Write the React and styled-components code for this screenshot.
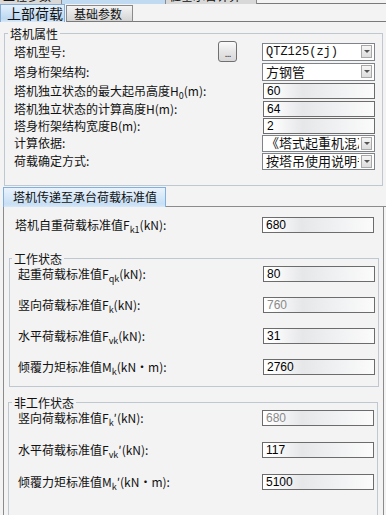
import React from 'react';
import styled, { createGlobalStyle } from 'styled-components';

const GlobalStyle = createGlobalStyle`
  body {
    margin: 0;
    background: #f3f3f3;
  }
`;

const Page = styled.div`
  width: 386px;
  height: 515px;
  overflow: hidden;
  background: #f3f3f3;
  font-family: "Noto Sans CJK SC", sans-serif;
  font-size: 12px;
  color: #111;
  display: flex;
  flex-direction: column;
`;

const TopStrip = styled.div`
  display: flex;
  height: 5px;
`;

const StubTab = styled.div`
  width: ${p => p.$w}px;
  height: 4px;
  overflow: hidden;
  background: ${p => (p.$active ? '#c0daf2' : '#d8d8d8')};
  border-right: 1px solid #8a8a8a;
  font-size: 12px;
  line-height: 12px;
  white-space: nowrap;
`;

const StubText = styled.div`
  margin-top: -10px;
  padding-left: 3px;
`;

const StripLine = styled.div`
  flex: 1;
  border-bottom: 1px solid #7a7a7a;
`;

const TabRow = styled.div`
  display: flex;
  align-items: flex-end;
  height: 18px;
`;

const Tab = styled.div`
  box-sizing: border-box;
  height: ${p => (p.$active ? 18 : 17)}px;
  width: ${p => (p.$active ? 65 : 67)}px;
  margin-left: ${p => (p.$active ? 0 : 1)}px;
  padding-left: ${p => (p.$active ? 6 : 7)}px;
  font-size: ${p => (p.$active ? 14 : 12)}px;
  line-height: ${p => (p.$active ? 17 : 15)}px;
  white-space: nowrap;
  background: ${p =>
    p.$active
      ? 'linear-gradient(#e4f0fb, #bcd8f1 80%, #d9e9f7)'
      : 'linear-gradient(#f4f4f4, #d4d4d4)'};
  border: 1px solid ${p => (p.$active ? '#86acd3' : '#8a8a8a')};
  border-bottom: ${p => (p.$active ? 'none' : '1px solid #7a7a7a')};
`;

const TabFill = styled.div`
  flex: 1;
  height: 100%;
  border-bottom: 1px solid #7a7a7a;
`;

const Group = styled.fieldset`
  margin: ${p => p.$m};
  padding: ${p => p.$pt || 0}px ${p => p.$pr}px ${p => p.$pb}px ${p => p.$pl}px;
  border: 1px solid #bfc8d0;
  min-width: 0;
  display: flex;
  flex-direction: column;
  gap: ${p => p.$gap || 0}px;
`;

const Legend = styled.legend`
  margin-left: ${p => p.$ml}px;
  padding: 0 2px;
  font-size: 12px;
  line-height: 13px;
  height: 13px;
`;

const Row = styled.div`
  display: flex;
  align-items: center;
  height: ${p => p.$h}px;
  padding-left: ${p => p.$pl || 0}px;
  padding-right: ${p => p.$pr || 0}px;
`;

const Label = styled.div`
  flex: 1;
  white-space: nowrap;
  line-height: 14px;
`;

const Sub = styled.sub`
  font-size: 9px;
  line-height: 0;
  vertical-align: -3px;
`;

const DotsButton = styled.div`
  box-sizing: border-box;
  width: 19px;
  height: 21px;
  margin-right: 25px;
  border: 1px solid #707070;
  border-radius: 3px;
  background: linear-gradient(#fbfbfb, #e6e6e6 50%, #d8d8d8);
  font-family: "Liberation Sans", sans-serif;
  font-size: 11px;
  line-height: 22px;
  text-align: center;
  letter-spacing: -1px;
  color: #333;
`;

const Select = styled.div`
  box-sizing: border-box;
  width: 113px;
  height: ${p => p.$h}px;
  border: 1px solid #7f8489;
  background: #fff;
  display: flex;
  align-items: center;
  padding-left: 3px;
  overflow: hidden;
`;

const SelectText = styled.div`
  flex: 1;
  overflow: hidden;
  white-space: nowrap;
  font-family: ${p => (p.$mono ? '"Liberation Mono", monospace' : 'inherit')};
  font-size: ${p => (p.$mono ? 12 : 13)}px;
  line-height: 14px;
`;

const Arrow = styled.div`
  box-sizing: border-box;
  width: 11px;
  height: 13px;
  margin: 0 2px 0 2px;
  border: 1px solid #a8a8a8;
  background: linear-gradient(#f6f6f6, #dcdcdc);
  display: flex;
  align-items: center;
  justify-content: center;

  &::after {
    content: '';
    border-left: 3px solid transparent;
    border-right: 3px solid transparent;
    border-top: 3px solid #555;
  }
`;

const Input = styled.input`
  box-sizing: border-box;
  width: 112px;
  height: 16px;
  margin: 0;
  padding: 0 3px;
  border: 1px solid #6c6c6c;
  border-radius: 0;
  outline: none;
  background: linear-gradient(to right, #ffffff 5%, #e6e7e9 35%, #f1f2f3 70%, #fbfbfb);
  font-family: "Liberation Sans", sans-serif;
  font-size: 12px;
  line-height: 14px;
  color: ${p => (p.$disabled ? '#8a8a8a' : '#000')};
`;

const SectionHead = styled.div`
  display: flex;
  height: 20px;
  margin: 1px 0 0 3px;
`;

const SectionTab = styled.div`
  box-sizing: border-box;
  width: 163px;
  height: 20px;
  padding-left: 9px;
  line-height: 18px;
  font-size: 12px;
  white-space: nowrap;
  background: linear-gradient(#eaf3fc, #c7dff5 85%, #d8e8f7);
  border: 1px solid #7fb0e0;
  border-bottom: none;
`;

const SectionFill = styled.div`
  flex: 1;
  border-bottom: 1px solid #8b8b8b;
`;

const Panel = styled.div`
  flex: 1;
  margin: 0 2px 0 3px;
  border-left: 1px solid #8b8b8b;
  border-right: 1px solid #8b8b8b;
  display: flex;
  flex-direction: column;
`;

const ValueRow = ({ label, value, disabled, h = 18, pl, pr }) => (
  <Row $h={h} $pl={pl} $pr={pr}>
    <Label>{label}</Label>
    <Input readOnly value={value} $disabled={disabled} />
  </Row>
);

const App = () => {
  return (
    <Page>
      <GlobalStyle />
      <TopStrip>
        <StubTab $w={61}><StubText>工程参数</StubText></StubTab>
        <StubTab $w={103} $active />
        <StubTab $w={90}><StubText>桩基承台计算</StubText></StubTab>
        <StripLine />
      </TopStrip>

      <TabRow>
        <Tab $active>上部荷载</Tab>
        <Tab>基础参数</Tab>
        <TabFill />
      </TabRow>

      <Group $m="5px 3px 0 4px" $pt={1} $pl={9} $pr={7} $pb={15}>
        <Legend $ml={-6}>塔机属性</Legend>
        <Row $h={21}>
          <Label>塔机型号:</Label>
          <DotsButton>...</DotsButton>
          <Select $h={18}>
            <SelectText $mono>QTZ125(zj)</SelectText>
            <Arrow />
          </Select>
        </Row>
        <Row $h={19}>
          <Label>塔身桁架结构:</Label>
          <Select $h={18}>
            <SelectText>方钢管</SelectText>
            <Arrow />
          </Select>
        </Row>
        <Row $h={19}>
          <Label>塔机独立状态的最大起吊高度H<Sub>0</Sub>(m):</Label>
          <Input readOnly value="60" />
        </Row>
        <Row $h={17}>
          <Label>塔机独立状态的计算高度H(m):</Label>
          <Input readOnly value="64" />
        </Row>
        <Row $h={17}>
          <Label>塔身桁架结构宽度B(m):</Label>
          <Input readOnly value="2" />
        </Row>
        <Row $h={18}>
          <Label>计算依据:</Label>
          <Select $h={17}>
            <SelectText>《塔式起重机混凝土基础工程技术规程》</SelectText>
            <Arrow />
          </Select>
        </Row>
        <Row $h={18}>
          <Label>荷载确定方式:</Label>
          <Select $h={17}>
            <SelectText>按塔吊使用说明书</SelectText>
            <Arrow />
          </Select>
        </Row>
      </Group>

      <SectionHead>
        <SectionTab>塔机传递至承台荷载标准值</SectionTab>
        <SectionFill />
      </SectionHead>

      <Panel>
        <Row $h={16} $pl={11} $pr={9} style={{ marginTop: 10 }}>
          <Label>塔机自重荷载标准值F<Sub>k1</Sub>(kN):</Label>
          <Input readOnly value="680" />
        </Row>

        <Group $m="19px 4px 0 5px" $pl={8} $pr={3} $pb={10} $gap={13}>
          <Legend $ml={-6}>工作状态</Legend>
          <ValueRow label={<>起重荷载标准值F<Sub>qk</Sub>(kN):</>} value="80" />
          <ValueRow label={<>竖向荷载标准值F<Sub>k</Sub>(kN):</>} value="760" disabled />
          <ValueRow label={<>水平荷载标准值F<Sub>vk</Sub>(kN):</>} value="31" />
          <ValueRow label={<>倾覆力矩标准值M<Sub>k</Sub>(kN·m):</>} value="2760" />
        </Group>

        <Group $m="9px 5px 0 4px" $pl={9} $pr={3} $pb={30} $gap={14}>
          <Legend $ml={-6}>非工作状态</Legend>
          <ValueRow label={<>竖向荷载标准值F<Sub>k</Sub>′(kN):</>} value="680" disabled />
          <ValueRow label={<>水平荷载标准值F<Sub>vk</Sub>′(kN):</>} value="117" />
          <ValueRow label={<>倾覆力矩标准值M<Sub>k</Sub>′(kN·m):</>} value="5100" />
        </Group>
      </Panel>
    </Page>
  );
};

export default App;
